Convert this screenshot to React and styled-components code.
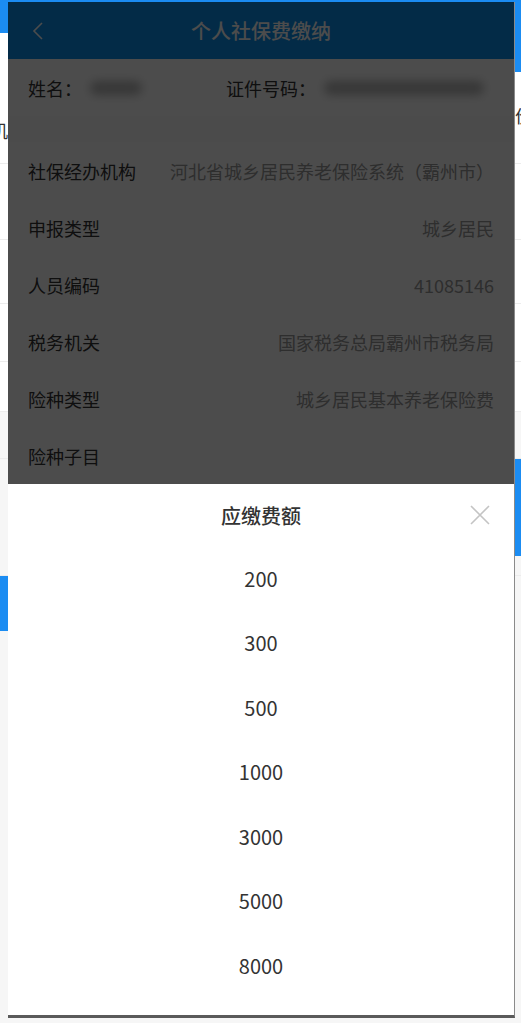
import React from "react";
import styled, { createGlobalStyle } from "styled-components";

const GlobalStyle = createGlobalStyle`
  * { box-sizing: border-box; }
  html, body { margin: 0; padding: 0; }
  body {
    width: 521px;
    height: 1023px;
    overflow: hidden;
    font-family: "Noto Sans CJK SC", "Noto Sans", sans-serif;
    background: #f6f6f6;
  }
`;

const rows = [
  { label: "社保经办机构", value: "河北省城乡居民养老保险系统（霸州市）" },
  { label: "申报类型", value: "城乡居民" },
  { label: "人员编码", value: "41085146" },
  { label: "税务机关", value: "国家税务总局霸州市税务局" },
  { label: "险种类型", value: "城乡居民基本养老保险费" },
  { label: "险种子目", value: "" },
];

const amounts = ["200", "300", "500", "1000", "3000", "5000", "8000"];

//? Page behind the screenshot
const Desk = styled.div`
  position: relative;
  width: 521px;
  height: 1023px;
  overflow: hidden;
`;

const BgHeader = styled.div`
  height: 33px;
  background: #1b8cf2;
`;

const BgHeaderTail = styled.div`
  display: flex;
  justify-content: flex-end;
  height: 39px;
  background: #ffffff;

  span {
    width: 12px;
    background: #1b8cf2;
  }
`;

const BgRow = styled.div`
  display: flex;
  justify-content: space-between;
  height: ${(p) => p.h}px;
  background: ${(p) => p.bg || "#ffffff"};
  border-bottom: 1px solid #ececec;
  font-size: 18px;
  line-height: 22px;
  color: #333;

  b {
    font-weight: 400;
  }
  .left {
    margin: 47px 0 0 -10px;
  }
  .right {
    margin: 32px -12px 0 0;
  }
`;

const BgBlock = styled.div`
  display: flex;
  justify-content: ${(p) => (p.side === "right" ? "flex-end" : "flex-start")};
  height: ${(p) => p.h}px;
  background: #f6f6f6;

  span {
    width: 12px;
    background: #1b8cf2;
  }
`;

//? Screenshot window
const Frame = styled.div`
  position: absolute;
  left: 8px;
  top: 2px;
  width: 507px;
  height: 1016px;
  background: #fafafa;
  border-right: 1px solid #8a8a8a;
  border-bottom: 3px solid #5a5a5a;
  overflow: hidden;
`;

const NavBar = styled.div`
  position: relative;
  display: flex;
  align-items: center;
  justify-content: center;
  height: 57px;
  background: #0a8fed;
  color: #ffffff;
  font-size: 20px;
  font-weight: 500;
`;

const Back = styled.svg`
  position: absolute;
  left: 22px;
  top: 18px;
`;

const NameRow = styled.div`
  display: grid;
  grid-template-columns: 198px 1fr;
  align-items: center;
  height: 57px;
  padding: 0 20px;
  background: #ffffff;
  margin-bottom: 26px;
  font-size: 18px;
  color: #333;
  white-space: nowrap;
`;

const Field = styled.div`
  display: flex;
  align-items: center;
`;

const Blurred = styled.span`
  display: inline-block;
  flex: none;
  width: ${(p) => p.w}px;
  height: 14px;
  margin-left: ${(p) => p.ml || 0}px;
  border-radius: 7px;
  background: #b8b8b8;
  filter: blur(5px);
`;

const InfoRow = styled.div`
  display: flex;
  align-items: center;
  justify-content: space-between;
  height: 57px;
  padding: 0 20px;
  background: #ffffff;
  font-size: 18px;

  .label {
    color: #333;
  }
  .value {
    color: #999;
  }
`;

const Mask = styled.div`
  position: absolute;
  inset: 0;
  background: rgba(0, 0, 0, 0.7);
`;

const Sheet = styled.div`
  position: absolute;
  left: 0;
  right: 0;
  bottom: 0;
  height: 531px;
  background: #ffffff;
  padding-bottom: 17px;
`;

const SheetHead = styled.div`
  position: relative;
  display: flex;
  align-items: center;
  justify-content: center;
  height: 62px;
  font-size: 20px;
  font-weight: 500;
  color: #333;
`;

const Close = styled.svg`
  position: absolute;
  right: 24px;
  top: 21px;
`;

const Option = styled.div`
  display: flex;
  align-items: center;
  justify-content: center;
  height: 64.5px;
  font-size: 20px;
  color: #333;
`;

const App = () => {
  return (
    <>
      <GlobalStyle />
      <Desk>
        <BgHeader />
        <BgHeaderTail>
          <span />
        </BgHeaderTail>
        <BgRow h={92}>
          <b className="left">机</b>
          <b className="right">价</b>
        </BgRow>
        <BgRow h={76} />
        <BgRow h={64} />
        <BgRow h={58} />
        <BgRow h={50} />
        <BgRow h={47} bg="#f6f6f6" />
        <BgBlock side="right" h={97}>
          <span />
        </BgBlock>
        <BgRow h={20} bg="#f6f6f6" />
        <BgBlock side="left" h={55}>
          <span />
        </BgBlock>

        <Frame>
          <NavBar>
            <Back width="16" height="22" viewBox="0 0 16 22">
              <path d="M12 3 L4 11 L12 19" fill="none" stroke="#ffffff" strokeWidth="1.6" />
            </Back>
            个人社保费缴纳
          </NavBar>
          <NameRow>
            <Field>
              姓名：<Blurred w={52} ml={8} />
            </Field>
            <Field>
              证件号码：<Blurred w={160} ml={8} />
            </Field>
          </NameRow>
          {rows.map((r) => (
            <InfoRow key={r.label}>
              <span className="label">{r.label}</span>
              <span className="value">{r.value}</span>
            </InfoRow>
          ))}
          <Mask />
          <Sheet>
            <SheetHead>
              应缴费额
              <Close width="20" height="20" viewBox="0 0 20 20">
                <path d="M1 1 L19 19 M19 1 L1 19" stroke="#c4c4c4" strokeWidth="1.6" fill="none" />
              </Close>
            </SheetHead>
            {amounts.map((a) => (
              <Option key={a}>{a}</Option>
            ))}
          </Sheet>
        </Frame>
      </Desk>
    </>
  );
};

export default App;
